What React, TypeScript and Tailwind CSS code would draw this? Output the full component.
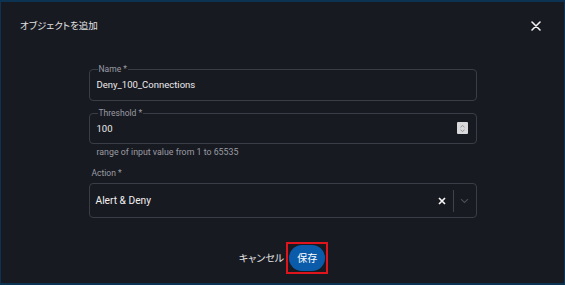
import React from "react";

const font = "font-['Roboto','Noto_Sans_CJK_JP',sans-serif]";

export default function App() {
  return (
    <div className={`w-[565px] h-[285px] bg-[#0c3452] pt-[2px] pb-[2px] px-[1px] ${font}`}>
      <div className="w-full h-full bg-[#181a21] flex flex-col">
        {/* header */}
        <div className="flex items-center justify-between pl-[19px] pr-[23px] pt-[14px] h-[34px]">
          <span className="text-[9.5px] text-[#e3e3e3] [font-feature-settings:'palt'] leading-[14px]">
            オブジェクトを追加
          </span>
          <svg width="10" height="10" viewBox="0 0 10 10">
            <path d="M1 1L9 9M9 1L1 9" stroke="#f2f2f2" strokeWidth="1.6" strokeLinecap="round" />
          </svg>
        </div>

        {/* body */}
        <div className="w-[388px] mx-auto mt-[27px] flex flex-col">
          <fieldset className="border border-[#3a3d45] rounded-[4px] px-[7px] pb-[5px]">
            <legend className="text-[8.5px] leading-[12px] text-[#9a9ca3] px-[1px] ml-[1px]">Name *</legend>
            <div className="h-[20px] leading-[20px] text-[9.5px] text-[#ececec]">Deny_100_Connections</div>
          </fieldset>

          <fieldset className="border border-[#3a3d45] rounded-[4px] pl-[7px] pr-[8px] pb-[4px] mt-[6px]">
            <legend className="text-[8.5px] leading-[12px] text-[#9a9ca3] px-[1px] ml-[1px]">Threshold *</legend>
            <div className="h-[20px] flex items-center justify-between">
              <span className="text-[9.5px] text-[#ececec] leading-[20px]">100</span>
              <div className="w-[11px] h-[12px] bg-[#d9d9dc] rounded-[1px] flex items-center justify-center mb-[2px]">
                <svg width="7" height="9" viewBox="0 0 7 9">
                  <path d="M1.5 3.2L3.5 1.5L5.5 3.2M1.5 5.8L3.5 7.5L5.5 5.8" stroke="#8a8c92" strokeWidth="0.9" fill="none" />
                </svg>
              </div>
            </div>
          </fieldset>

          <div className="text-[8.8px] text-[#9a9ca3] pl-[8px] mt-[2px] leading-[13px]">
            range of input value from 1 to 65535
          </div>

          <div className="text-[8.5px] text-[#9a9ca3] pl-[3px] mt-[8px] leading-[13px]">Action *</div>

          <div className="mt-[3px] h-[35px] border border-[#3a3d45] rounded-[4px] flex items-center pl-[6px]">
            <span className="flex-1 text-[10.2px] text-[#f0f0f0]">Alert &amp; Deny</span>
            <svg width="8" height="8" viewBox="0 0 8 8" className="mr-[7px]">
              <path d="M1 1L7 7M7 1L1 7" stroke="#f5f5f5" strokeWidth="1.7" />
            </svg>
            <div className="w-[1px] h-[22px] bg-[#3f424a]" />
            <svg width="9" height="6" viewBox="0 0 9 6" className="ml-[6px] mr-[7px]">
              <path d="M1 1.2L4.5 4.5L8 1.2" stroke="#4c4f57" strokeWidth="1.1" fill="none" />
            </svg>
          </div>
        </div>

        {/* footer */}
        <div className="flex items-center justify-center mt-[24px] pl-[2px]">
          <span className="text-[10px] text-[#e3e3e3] [font-feature-settings:'palt'] mr-[2px]">キャンセル</span>
          <div className="border-2 border-[#e0141c] p-[1px]">
            <div className="w-[36px] h-[26px] rounded-full bg-[#0b5bab] flex items-center justify-center text-[10px] text-white">
              保存
            </div>
          </div>
        </div>
      </div>
    </div>
  );
}
